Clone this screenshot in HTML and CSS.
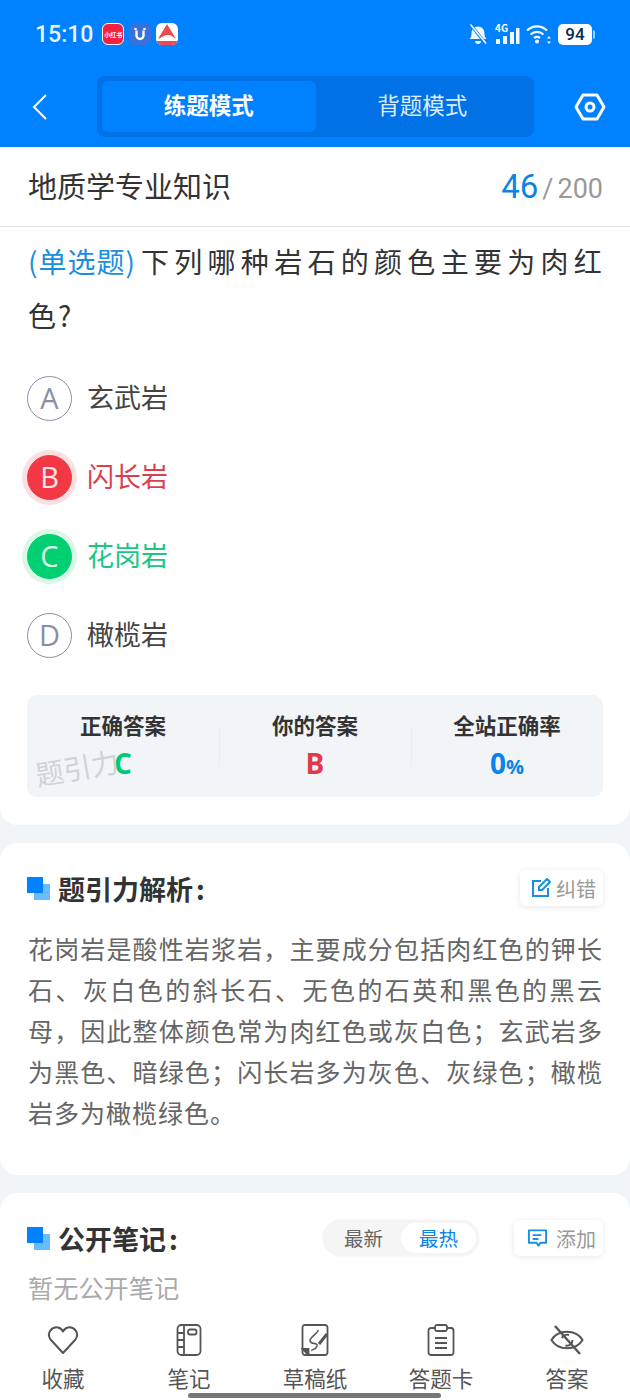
FILE: index.html
```html
<!DOCTYPE html>
<html lang="zh-CN">
<head>
  <meta charset="UTF-8" />
  <meta name="viewport" content="width=device-width, initial-scale=1.0" />
  <title>题引力</title>
  <link rel="stylesheet" href="styles.css">
</head>
<body>
  <div class="page">
    <header class="topbar">
      <div class="status">
        <span class="clock">15:10</span>
        <span class="app app-red">小红书</span>
        <span class="app app-blue">
          <svg width="16" height="16" viewBox="0 0 16 16" fill="none" stroke="#fff" stroke-width="2.400"><path d="M3.500 2v2M12.500 2v2M4.500 4.500v5a3.500 3.500 0 0 0 7 0v-5"/></svg>
        </span>
        <span class="app app-white">
          <svg width="22" height="22" viewBox="0 0 22 22"><path d="M2 16 L11 1 L20 16 L14 12 L10 12Z" fill="#ee4b50"/><rect x="0" y="18" width="22" height="4" fill="#ee4b50"/></svg>
        </span>
        <span class="status-right">
          <svg width="20" height="22" viewBox="0 0 20 22" fill="#f2f8ff"><path d="M1.500 16c1.500-1.500 2-3 2-5.500C3.500 6.500 6 3.500 10 3.500s6.500 3 6.500 7c0 2.500.5 4 2 5.500Z"/><path d="M7 18h6a3 3 0 0 1-6 0Z"/><path d="M2 1l16 20" stroke="#0081ff" stroke-width="3"/><path d="M2.500 1.500l15.500 19" stroke="#f2f8ff" stroke-width="1.600"/></svg>
          <span class="signal">
            <span class="net">4G</span>
            <svg width="26" height="22" viewBox="0 0 26 22" fill="#f2f8ff"><rect x="2" y="16" width="4" height="5"/><rect x="9" y="13" width="4" height="8"/><rect x="16" y="9" width="4" height="12"/><rect x="22" y="5" width="3.500" height="16"/></svg>
          </span>
          <svg width="26" height="22" viewBox="0 0 26 22" fill="none" stroke="#f2f8ff" stroke-width="2.200"><path d="M1 7.500c6-5.500 14-5.500 20 0"/><path d="M4.500 11.500c4-3.400 9-3.400 13 0"/><path d="M8 15c2-1.500 4-1.500 6 0"/><circle cx="11" cy="18.500" r="1" fill="#f2f8ff"/><path d="M23 13l2 2.500h-4zM23 21l2-2.500h-4z" fill="#f2f8ff" stroke="none"/></svg>
          <span class="battery">94</span>
        </span>
      </div>
      <div class="navrow">
        <svg class="back" width="16" height="26" viewBox="0 0 16 26" fill="none" stroke="#fff" stroke-width="2"><path d="M14 1 L2 13 L14 25"/></svg>
        <div class="tabs">
          <span class="tab tab-on">练题模式</span>
          <span class="tab">背题模式</span>
        </div>
        <svg class="gear" width="32" height="28" viewBox="0 0 32 28" fill="none" stroke="#fff" stroke-width="3"><path d="M9 2h14l7 12-7 12H9L2 14Z" stroke-linejoin="round"/><circle cx="16" cy="14" r="4"/></svg>
      </div>
    </header>

    <section class="card card-q">
      <div class="subject">
        <span class="subject-name">地质学专业知识</span>
        <span class="progress"><b>46</b><i>/</i>200</span>
      </div>
      <p class="question"><span class="qtype">(单选题)</span>下列哪种岩石的颜色主要为肉红<span class="tight">色</span>?</p>
      <ul class="options">
        <li class="option"><span class="mark">A</span>玄武岩</li>
        <li class="option wrong"><span class="mark">B</span>闪长岩</li>
        <li class="option right"><span class="mark">C</span>花岗岩</li>
        <li class="option"><span class="mark">D</span>橄榄岩</li>
      </ul>
      <div class="stats">
        <div class="stat"><h4>正确答案</h4><span class="val green">C</span></div>
        <div class="stat"><h4>你的答案</h4><span class="val red">B</span></div>
        <div class="stat"><h4>全站正确率</h4><span class="val blue">0<small>%</small></span></div>
        <span class="watermark">题引力</span>
      </div>
    </section>

    <section class="card card-a">
      <div class="card-head">
        <span class="squares"></span>
        <h3>题引力解析<span class="colon">:</span></h3>
        <span class="chip">
          <svg width="20" height="20" viewBox="0 0 20 20" fill="none" stroke="#1a8fe0" stroke-width="2"><path d="M10 3H2v15h15v-8"/><path d="M8 12V9l8-8 3 3-8 8Z"/></svg>
          纠错
        </span>
      </div>
      <p class="analysis">花岗岩是酸性岩浆岩&#65292;主要成分包括肉红色的钾长石、灰白色的斜长石、无色的石英和黑色的黑云母&#65292;因此整体颜色常为肉红色或灰白色&#65307;玄武岩多为黑色、暗绿色&#65307;闪长岩多为灰色、灰绿色&#65307;橄榄岩多为橄榄绿色。</p>
    </section>

    <section class="card card-n">
      <div class="card-head">
        <span class="squares"></span>
        <h3>公开笔记<span class="colon">:</span></h3>
        <div class="sort">
          <span class="sort-item">最新</span>
          <span class="sort-item sort-on">最热</span>
        </div>
        <span class="chip chip-add">
          <svg width="21" height="20" viewBox="0 0 22 20" fill="none" stroke="#1a8fe0" stroke-width="2"><path d="M2 2h18v13h-6l-2 3-2-3H2Z" stroke-linejoin="round"/><path d="M6 7h9M6 11h6"/></svg>
          添加
        </span>
      </div>
      <p class="empty">暂无公开笔记</p>
    </section>

    <nav class="tabbar">
      <a class="tool">
        <svg width="32" height="32" viewBox="0 0 32 32" fill="none" stroke="#555" stroke-width="2"><path d="M16 29 L3.500 15.500C-1 9 5 2.500 11 3.500 13.500 4 15 5.500 16 7.500 17 5.500 18.500 4 21 3.500 27 2.500 33 9 28.500 15.500Z" stroke-linejoin="round"/></svg>
        收藏
      </a>
      <a class="tool">
        <svg width="26" height="32" viewBox="0 0 26 32" fill="none" stroke="#555" stroke-width="1.800"><rect x="1.500" y="1" width="23" height="30" rx="4"/><path d="M8 1v30M1.500 9h6.500M1.500 16h6.500M1.500 23h6.500"/><rect x="12" y="5.500" width="8.500" height="5" rx="2"/></svg>
        笔记
      </a>
      <a class="tool">
        <svg width="28" height="32" viewBox="0 0 28 32" fill="none" stroke="#555" stroke-width="1.800"><path d="M7 31H4a2.500 2.500 0 0 1-2.500-2.500V3.500A2.500 2.500 0 0 1 4 1h20a2.500 2.500 0 0 1 2.500 2.500v25A2.500 2.500 0 0 1 24 31Z"/><path d="M1.500 25h6v6Z" fill="#555"/><path d="M17 6c1 3-9 7-8 11s8 1 7 5-6 3-5 5" stroke-width="1.500"/><path d="M18 20 L26 10" stroke-width="3"/></svg>
        草稿纸
      </a>
      <a class="tool">
        <svg width="28" height="32" viewBox="0 0 28 32" fill="none" stroke="#555" stroke-width="1.800"><path d="M8 4H4a2.500 2.500 0 0 0-2.500 2.500v22A2.500 2.500 0 0 0 4 31h20a2.500 2.500 0 0 0 2.500-2.500v-22A2.500 2.500 0 0 0 24 4h-4"/><rect x="8" y="1" width="12" height="6" rx="2"/><path d="M8 14h12M8 19h12M8 24h12"/></svg>
        答题卡
      </a>
      <a class="tool">
        <svg width="34" height="32" viewBox="0 0 34 32" fill="none" stroke="#555" stroke-width="2"><path d="M1.500 16C8 5 26 5 32.500 16 26 27 8 27 1.500 16Z"/><path d="M12 14a5.500 5.500 0 0 1 7-3M22.500 16a5.500 5.500 0 0 1-7 5.500"/><path d="M5 2 L30 30" stroke-width="2.400"/></svg>
        答案
      </a>
    </nav>
    <div class="home-bar"></div>
  </div>
</body>
</html>
```

FILE: styles.css
```css
* {
  box-sizing: border-box;
}
html, body {
  margin: 0;
  padding: 0;
}
body {
  font-family: "Noto Sans CJK SC", "Noto Sans", sans-serif;
  background: #f1f5f8;
  color: #333;
}
.page {
  position: relative;
  width: 630px;
  height: 1400px;
  overflow: hidden;
}

/* top */
.topbar {
  height: 147px;
  background: #0081ff;
  color: white;
  padding: 22px 25px 0 35px;
}
.status {
  display: flex;
  align-items: center;
  height: 24px;
  padding-right: 13px;
}
.clock {
  font-family: Roboto, sans-serif;
  font-size: 23px;
  font-weight: 500;
  margin-right: 9px;
  color: #eaf4ff;
}
.app {
  width: 22px;
  height: 22px;
  border-radius: 6px;
  margin-right: 5px;
  display: flex;
  align-items: center;
  justify-content: center;
  overflow: hidden;
}
.app-red {
  background: #f5203f;
  font-size: 6px;
  font-weight: 700;
  border: 1px solid #fff;
  white-space: nowrap;
}
.app-blue {
  background: #3a6fdc;
}
.app-white {
  background: #fff;
}
.status-right {
  margin-left: auto;
  display: flex;
  align-items: center;
  gap: 6px;
}
.signal {
  position: relative;
  display: flex;
}
.net {
  position: absolute;
  left: 1px;
  top: 0;
  font-size: 10px;
  font-weight: 700;
  line-height: 10px;
}
.battery {
  position: relative;
  width: 34px;
  height: 21px;
  background: white;
  color: #0b2a52;
  border-radius: 5px;
  font-family: Roboto, sans-serif;
  font-size: 17px;
  font-weight: 500;
  line-height: 21px;
  text-align: center;
}
.battery::after {
  content: "";
  position: absolute;
  right: -3px;
  top: 6px;
  width: 2px;
  height: 9px;
  border-radius: 0 2px 2px 0;
  background: #9fd0ff;
}
.navrow {
  display: flex;
  align-items: center;
  margin: 30px 0 0 -3px;
}
.back {
  flex: none;
}
.tabs {
  display: flex;
  flex: none;
  width: 437px;
  height: 61px;
  margin-left: 49px;
  padding: 5px 5px;
  background: #0072e6;
  border-radius: 8px;
}
.tab {
  flex: 1;
  font-size: 22.500px;
  line-height: 47px;
  text-align: center;
  color: #dcecff;
}
.tab-on {
  background: #0081ff;
  border-radius: 6px;
  font-weight: 700;
  color: white;
}
.gear {
  flex: none;
  margin-left: 40px;
}

/* cards */
.card {
  background: white;
  border-radius: 18px;
  padding: 0 27px;
}
.card-q {
  border-radius: 0 0 18px 18px;
  height: 678px;
}
.card-a {
  height: 332px;
  margin-top: 18px;
  padding-top: 27px;
}
.card-n {
  height: 300px;
  margin-top: 18px;
  padding-top: 27px;
}
.subject {
  display: flex;
  align-items: center;
  justify-content: space-between;
  height: 80px;
  margin: 0 -27px;
  padding: 0 27px 3px 28px;
  border-bottom: 1px solid #e3e3e3;
}
.subject-name {
  font-size: 29px;
  color: #333;
}
.progress {
  margin-top: 3px;
  font-family: Roboto, sans-serif;
  font-size: 27px;
  color: #999;
}
.progress b {
  font-size: 33px;
  font-weight: 400;
  color: #0a84ea;
}
.progress i {
  font-style: normal;
  margin: 0 4px;
}
.question {
  margin: 7px -5px 0 1px;
  font-size: 28px;
  line-height: 54px;
  letter-spacing: 5.300px;
  color: #333;
}
.qtype {
  color: #1a8fe0;
  letter-spacing: 1px;
  margin-right: 5px;
}
.tight {
  letter-spacing: 2px;
}
.options {
  list-style: none;
  margin: 15px 0 0;
  padding: 0;
}
.option {
  display: flex;
  align-items: center;
  height: 79px;
  font-size: 27px;
  color: #444;
}
.mark {
  flex: none;
  width: 45px;
  height: 45px;
  margin: 4px 15px 0 0;
  border: 1.500px solid #8a8fa6;
  border-radius: 50%;
  font-family: "Open Sans", sans-serif;
  font-size: 29px;
  line-height: 41px;
  text-align: center;
  color: #8a8fa6;
}
.wrong {
  color: #dc3f4c;
}
.wrong .mark {
  background: #f23845;
  border-color: #f23845;
  color: #ffe6e6;
  box-shadow: 0 0 0 5px #fbdfe1;
}
.right {
  color: #1dc585;
}
.right .mark {
  background: #00d072;
  border-color: #00d072;
  color: #dcfbe9;
  box-shadow: 0 0 0 5px #dcf7e8;
}

/* stats */
.stats {
  position: relative;
  display: flex;
  height: 102px;
  margin-top: 22px;
  background: #f1f5f8;
  border-radius: 10px;
}
.stat {
  flex: 1;
  text-align: center;
  padding-top: 14px;
}
.stat + .stat {
  background: linear-gradient(#e8ecef, #e8ecef) left 33px / 1px 38px no-repeat;
}
.stat h4 {
  margin: 0;
  font-size: 21.500px;
  line-height: 31px;
  font-weight: 700;
  color: #333;
}
.val {
  display: block;
  font-family: "Open Sans", sans-serif;
  font-size: 28px;
  font-weight: 700;
  line-height: 46px;
}
.val small {
  font-size: 20px;
}
.green {
  color: #00c978;
}
.red {
  color: #e23a48;
}
.blue {
  color: #0a84ea;
}
.watermark {
  position: absolute;
  left: 8px;
  top: 52px;
  font-size: 28px;
  color: #cfd3d6;
  transform: rotate(-10deg);
}

/* section heads */
.card-head {
  display: flex;
  align-items: center;
  height: 36px;
}
.squares {
  width: 23px;
  height: 23px;
  margin-right: 8px;
  flex: none;
  background: linear-gradient(#0081ff, #0081ff) 0 0 / 16px 16px no-repeat,
    linear-gradient(#66bcff, #66bcff) 7px 7px / 16px 16px no-repeat;
}
.card-head h3 {
  margin: 0;
  font-size: 27px;
  font-weight: 700;
  color: #333;
}
.colon {
  margin-left: 3px;
}
.chip {
  display: flex;
  align-items: center;
  gap: 5px;
  height: 36px;
  margin-left: auto;
  padding: 0 7px 0 11px;
  border-radius: 6px;
  background: white;
  box-shadow: 0 1px 6px rgba(0, 0, 0, 0.1);
  font-size: 20px;
  color: #999;
}
.analysis {
  margin: 22px 0 0 1px;
  font-size: 25px;
  line-height: 41px;
  color: #666;
  letter-spacing: 1px;
  text-align: justify;
}
.sort {
  display: flex;
  align-items: center;
  height: 36px;
  margin-left: auto;
  padding: 3px;
  border-radius: 18px;
  background: #f5f5f5;
  box-shadow: 0 0 2px rgba(0, 0, 0, 0.08);
  font-size: 19.500px;
}
.sort-item {
  width: 75px;
  line-height: 30px;
  text-align: center;
  color: #666;
}
.sort-on {
  background: white;
  border-radius: 15px;
  color: #0a84ea;
}
.chip-add {
  margin-left: 35px;
  padding-left: 13px;
  gap: 8px;
}
.empty {
  margin: 13px 0 0 1px;
  font-size: 25.200px;
  color: #aaa;
}

/* bottom */
.tabbar {
  position: absolute;
  left: 0;
  right: 0;
  bottom: 0;
  height: 90px;
  display: flex;
  justify-content: space-between;
  padding: 14px 31px 0;
  background: white;
}
.tool {
  width: 64px;
  display: flex;
  flex-direction: column;
  align-items: center;
  justify-content: space-between;
  height: 68px;
  font-size: 21.500px;
  line-height: 28px;
  color: #555;
  white-space: nowrap;
}
.home-bar {
  position: absolute;
  left: 188px;
  bottom: 2px;
  width: 253px;
  height: 5px;
  border-radius: 3px;
  background: #777;
}
```
